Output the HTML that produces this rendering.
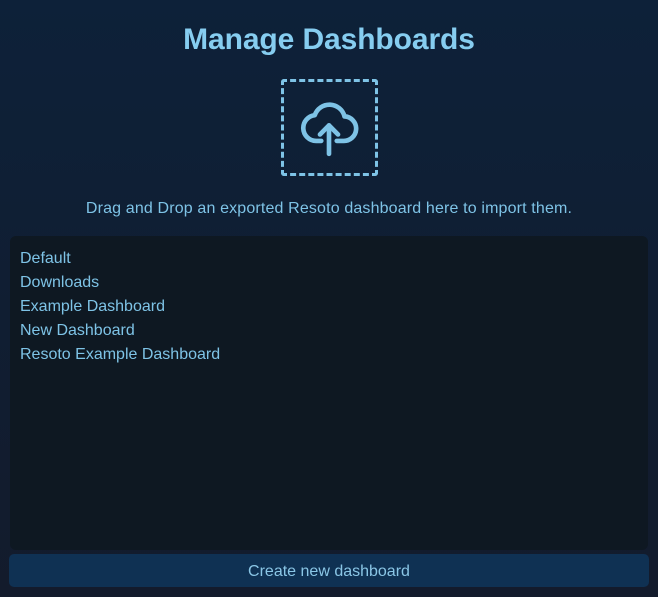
<!DOCTYPE html>
<html><head><meta charset="utf-8"><style>
html,body{margin:0;padding:0}
body{width:658px;height:597px;overflow:hidden;background:linear-gradient(#0d2139,#131b2c);font-family:"Liberation Sans",sans-serif;position:relative;color:#7ec3e6}
h1{position:absolute;top:23px;left:0;width:658px;text-align:center;margin:0;font-size:30px;font-weight:bold;color:#86cdf0;letter-spacing:-0.1px}
.drop{position:absolute;left:281px;top:79px;width:91px;height:91px;border:3px dashed #7ec3e6;border-radius:3px}
.hint{position:absolute;top:200px;left:0;width:658px;text-align:center;font-size:16px;letter-spacing:0.15px;color:#7ec3e6}
.list{position:absolute;left:10px;top:236px;width:638px;height:314px;background:#0e1822;border-radius:6px}
.list div{position:absolute;left:10px;font-size:16px;line-height:24px}
.btn{position:absolute;left:9px;top:554px;width:640px;height:33px;background:#0f3153;border-radius:5px;text-align:center;line-height:35px;font-size:16px;color:#8ac6e6}
</style></head><body>
<h1>Manage Dashboards</h1>
<div class="drop"></div>
<svg style="position:absolute;left:298px;top:97px" width="62" height="62" viewBox="0 0 24 24" fill="none" stroke="#7ec3e6" stroke-width="1.8" stroke-linecap="round" stroke-linejoin="round">
<path d="M9 17H7a5 5 0 0 1-.5-9.97A6 6 0 0 1 18 7.5a4.5 4.5 0 0 1-.5 9.5H15"/>
<path d="M12 22V11"/><path d="M8.5 14.5L12 11l3.5 3.5"/>
</svg>
<div class="hint">Drag and Drop an exported Resoto dashboard here to import them.</div>
<div class="list">
<div style="top:11px">Default</div>
<div style="top:35px">Downloads</div>
<div style="top:59px">Example Dashboard</div>
<div style="top:83px">New Dashboard</div>
<div style="top:107px">Resoto Example Dashboard</div>
</div>
<div class="btn">Create new dashboard</div>
</body></html>
